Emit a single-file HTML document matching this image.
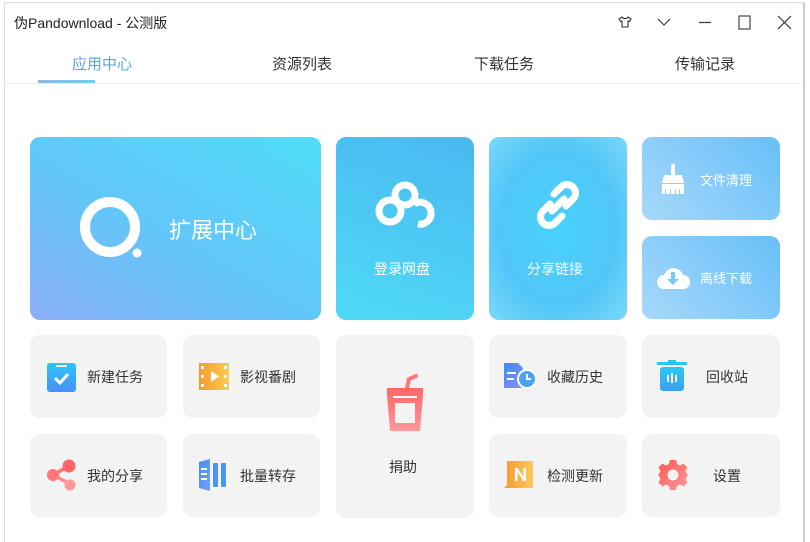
<!DOCTYPE html>
<html><head><meta charset="utf-8"><style>
*{margin:0;padding:0;box-sizing:border-box}
body{width:810px;height:537px;background:#fff;position:relative;overflow:hidden;font-family:"Liberation Sans","Noto Sans CJK SC",sans-serif}
.win{position:absolute;left:4px;top:2px;width:801px;height:540px;background:#fff;border-left:1px solid #ddd;border-top:1px solid #ddd;border-right:2px solid #ccc}
.t{position:absolute;font-size:14px;color:#222}
.tab{position:absolute;top:53px;font-size:15px;color:#333}
.tile{position:absolute;border-radius:10px;background:#f3f3f4}
.lbl{position:absolute;font-size:14px;color:#333;white-space:nowrap}
.wl{color:#fff}
svg{position:absolute}
</style></head><body>
<div class="win"></div>
<div class="t" style="left:14px;top:13px;font-size:14px">伪Pandownload - 公测版</div>
<svg style="left:617px;top:14px" width="16" height="16" viewBox="0 0 16 16" fill="none" stroke="#333" stroke-width="1.1"><path d="M5 3L2 5l1.5 2.5L5 7v6h6V7l1.5.5L14 5l-3-2c-.5 1-1.5 1.5-3 1.5S5.5 4 5 3z"/></svg>
<svg style="left:657px;top:16px" width="14" height="12" viewBox="0 0 14 12" fill="none" stroke="#333" stroke-width="1.1"><path d="M1 3l6 6 6-6"/></svg>
<svg style="left:698px;top:14px" width="14" height="16"><path d="M1 8.5h12" stroke="#333" stroke-width="1.2"/></svg>
<svg style="left:738px;top:15px" width="14" height="15"><rect x="1" y="1" width="11" height="13" fill="none" stroke="#333" stroke-width="1.1"/></svg>
<svg style="left:777px;top:15px" width="15" height="15" fill="none" stroke="#333" stroke-width="1.2"><path d="M1 1l13 13M14 1L1 14"/></svg>

<div class="tab" style="left:72px;color:#5aa8d8">应用中心</div>
<div style="position:absolute;left:38px;top:80px;width:57px;height:3px;background:linear-gradient(90deg,#8fb5e4,#6dcff0)"></div>
<div class="tab" style="left:272px">资源列表</div>
<div class="tab" style="left:474px">下载任务</div>
<div class="tab" style="left:675px">传输记录</div>
<div style="position:absolute;left:5px;top:83px;width:798px;height:1px;background:#eee"></div>

<div class="tile" style="left:30px;top:137px;width:291px;height:183px;background:linear-gradient(30deg,#8aaef8 0%,#63c6f8 45%,#4fdcf8 100%)"></div>
<svg style="left:80px;top:197px" width="66" height="64"><circle cx="30" cy="30" r="25" fill="none" stroke="#fff" stroke-width="10"/><circle cx="57" cy="56" r="4.5" fill="#fff"/></svg>
<div class="lbl wl" style="left:169px;top:213px;font-size:22px">扩展中心</div>

<div class="tile" style="left:336px;top:137px;width:138px;height:183px;background:linear-gradient(200deg,#4ab8f2,#4fdaf6)"></div>
<svg style="left:374px;top:180px" width="62" height="50" viewBox="0 0 62 50" fill="none" stroke="#fff" stroke-width="7"><circle cx="16" cy="31" r="11"/><circle cx="31" cy="15" r="10"/><path d="M40 24a11 11 0 1 1 4 20"/></svg>
<div class="lbl wl" style="left:374px;top:259px">登录网盘</div>

<div class="tile" style="left:489px;top:137px;width:138px;height:183px;background:radial-gradient(ellipse at 50% 50%,#46d2fa,#52c6f8 60%,#7ad8f8)"></div>
<svg style="left:532px;top:178px" width="52" height="54" viewBox="0 0 52 54" fill="none" stroke="#fff" stroke-width="7" stroke-linecap="round"><path d="M22 16l7-7a8 8 0 0 1 12 12l-7 7"/><path d="M30 38l-7 7a8 8 0 0 1-12-12l7-7"/><path d="M20 33l12-12"/></svg>
<div class="lbl wl" style="left:527px;top:259px">分享链接</div>

<div class="tile" style="left:642px;top:137px;width:138px;height:83px;background:linear-gradient(45deg,#a6d8fb,#68bff8)"></div>
<svg style="left:659px;top:163px" width="28" height="32" viewBox="0 0 28 32" fill="#fff"><rect x="12" y="1" width="4" height="11"/><path d="M5 12h18l2 8H3z"/><path d="M3 21h22v10h-4v-5h-1v5h-3v-5h-1v5h-4v-5h-1v5H7v-5H6v5H3z"/></svg>
<div class="lbl wl" style="left:700px;top:170px;font-size:13px">文件清理</div>

<div class="tile" style="left:642px;top:236px;width:138px;height:83px;background:linear-gradient(45deg,#a6d8fb,#68bff8)"></div>
<svg style="left:656px;top:264px" width="34" height="26" viewBox="0 0 34 26"><path d="M8 25a7 7 0 0 1 0-14 10 10 0 0 1 19 0 7 7 0 0 1 0 14z" fill="#fff"/><path d="M15 8h4v7h4l-6 6-6-6h4z" fill="#7cc6f6"/></svg>
<div class="lbl wl" style="left:700px;top:268px;font-size:13px">离线下载</div>

<div class="tile" style="left:30px;top:335px;width:137px;height:83px"></div>
<svg style="left:47px;top:361px" width="30" height="32"><defs><linearGradient id="g1" x1="0" y1="0" x2="0" y2="1"><stop offset="0" stop-color="#2cc6f6"/><stop offset="1" stop-color="#4a8ff5"/></linearGradient></defs><rect x="0" y="2" width="29" height="29" rx="3" fill="url(#g1)"/><rect x="9" y="4" width="11" height="2" fill="#fff"/><path d="M8 17l5 5 8-9" fill="none" stroke="#fff" stroke-width="3"/></svg>
<div class="lbl" style="left:87px;top:367px">新建任务</div>

<div class="tile" style="left:183px;top:335px;width:137px;height:83px"></div>
<svg style="left:199px;top:363px" width="30" height="28"><defs><linearGradient id="g2" x1="0" y1="0" x2="1" y2="0"><stop offset="0" stop-color="#f39c2f"/><stop offset="1" stop-color="#fbcb52"/></linearGradient></defs><rect width="30" height="27" fill="url(#g2)"/><g fill="#fff"><rect x="2" y="3" width="3" height="3"/><rect x="2" y="12" width="3" height="3"/><rect x="2" y="21" width="3" height="3"/><rect x="25" y="3" width="3" height="3"/><rect x="25" y="12" width="3" height="3"/><rect x="25" y="21" width="3" height="3"/><path d="M12 8l8 5.5-8 5.5z"/></g></svg>
<div class="lbl" style="left:240px;top:367px">影视番剧</div>

<div class="tile" style="left:336px;top:335px;width:138px;height:183px"></div>
<svg style="left:385px;top:374px" width="40" height="58"><defs><linearGradient id="g3" x1="0" y1="0" x2="0" y2="1"><stop offset="0" stop-color="#f66"/><stop offset="1" stop-color="#fb9a9a"/></linearGradient></defs><path d="M22 14l2-9 7-3" fill="none" stroke="#f77" stroke-width="4" stroke-linecap="round"/><path d="M2 14h36v7l-3 36H5L2 21z" fill="url(#g3)"/><rect x="8" y="22" width="24" height="2" fill="#fff"/><rect x="10" y="29" width="20" height="20" fill="#f3f3f4"/></svg>
<div class="lbl" style="left:389px;top:457px">捐助</div>

<div class="tile" style="left:489px;top:335px;width:138px;height:83px"></div>
<svg style="left:503px;top:362px" width="34" height="28"><defs><linearGradient id="g4" x1="0" y1="0" x2="1" y2="1"><stop offset="0" stop-color="#3c8df4"/><stop offset="1" stop-color="#8b8ef5"/></linearGradient></defs><path d="M1 1h14l5 5v20H1z" fill="url(#g4)"/><g fill="#fff"><rect x="4" y="10" width="9" height="2"/><rect x="4" y="16" width="7" height="2"/></g><circle cx="24" cy="17" r="9" fill="#4aa2f4" stroke="#fff" stroke-width="2"/><path d="M24 12v5h4" fill="none" stroke="#fff" stroke-width="2"/></svg>
<div class="lbl" style="left:547px;top:367px">收藏历史</div>

<div class="tile" style="left:642px;top:335px;width:138px;height:83px"></div>
<svg style="left:657px;top:360px" width="32" height="32"><defs><linearGradient id="g5" x1="0" y1="0" x2="0" y2="1"><stop offset="0" stop-color="#27cbf4"/><stop offset="1" stop-color="#3d9ff4"/></linearGradient></defs><rect x="0" y="2" width="30" height="3" fill="#2cc6f6"/><rect x="11" y="0" width="8" height="3" fill="#2cc6f6"/><rect x="3" y="7" width="24" height="24" rx="3" fill="url(#g5)"/><g fill="#fff"><rect x="10" y="15" width="2" height="7"/><rect x="14" y="13" width="2" height="10"/><rect x="18" y="15" width="2" height="7"/></g></svg>
<div class="lbl" style="left:706px;top:367px">回收站</div>

<div class="tile" style="left:30px;top:434px;width:137px;height:83px"></div>
<svg style="left:46px;top:458px" width="30" height="34"><defs><linearGradient id="g6" x1="0" y1="0" x2="0" y2="1"><stop offset="0" stop-color="#f66"/><stop offset="1" stop-color="#fa9a9a"/></linearGradient></defs><path d="M23 8L7 17l17 9" fill="none" stroke="url(#g6)" stroke-width="3.5"/><circle cx="23" cy="8" r="6.5" fill="#f66"/><circle cx="7" cy="17" r="6" fill="#f77"/><circle cx="24" cy="27" r="5.5" fill="#f99"/></svg>
<div class="lbl" style="left:87px;top:466px">我的分享</div>

<div class="tile" style="left:183px;top:434px;width:137px;height:83px"></div>
<svg style="left:198px;top:458px" width="34" height="34"><defs><linearGradient id="g7" x1="0" y1="0" x2="1" y2="1"><stop offset="0" stop-color="#3f8ff2"/><stop offset="1" stop-color="#7aa0f5"/></linearGradient></defs><path d="M1 4l11-3v32L1 30z" fill="url(#g7)"/><g fill="#fff"><rect x="3" y="10" width="6" height="2"/><rect x="3" y="15" width="6" height="2"/><rect x="3" y="20" width="6" height="2"/></g><rect x="15" y="5" width="5" height="24" rx="1" fill="#4a95f4"/><rect x="23" y="5" width="5" height="24" rx="1" fill="#4a95f4"/></svg>
<div class="lbl" style="left:240px;top:466px">批量转存</div>

<div class="tile" style="left:489px;top:434px;width:138px;height:83px"></div>
<svg style="left:504px;top:460px" width="32" height="30"><defs><linearGradient id="g8" x1="0" y1="0" x2="1" y2="0"><stop offset="0" stop-color="#f59a2c"/><stop offset="1" stop-color="#fccb5a"/></linearGradient></defs><path d="M3 1h26v27H0l3-3z" fill="url(#g8)"/><path d="M11 21V8h2.5l6 9V8H22v13h-2.5l-6-9v9z" fill="#fff"/></svg>
<div class="lbl" style="left:547px;top:466px">检测更新</div>

<div class="tile" style="left:642px;top:434px;width:138px;height:83px"></div>
<svg style="left:657px;top:459px" width="32" height="32" viewBox="0 0 32 32"><defs><linearGradient id="g9" x1="0" y1="0" x2="1" y2="1"><stop offset="0" stop-color="#f55"/><stop offset="1" stop-color="#f99"/></linearGradient></defs><path fill="url(#g9)" fill-rule="evenodd" d="M13 1h6l1 4 3 1.5 3.5-2 4 4-2 3.5L30 15l1 1v0l-1 1-1.5 3 2 3.5-4 4-3.5-2L20 27l-1 4h-6l-1-4-3-1.5-3.5 2-4-4 2-3.5L2 17l-1-1 1-1 1.5-3-2-3.5 4-4 3.5 2L12 5zM16 10.5a5.5 5.5 0 1 0 0.01 0z"/></svg>
<div class="lbl" style="left:713px;top:466px">设置</div>
</body></html>
